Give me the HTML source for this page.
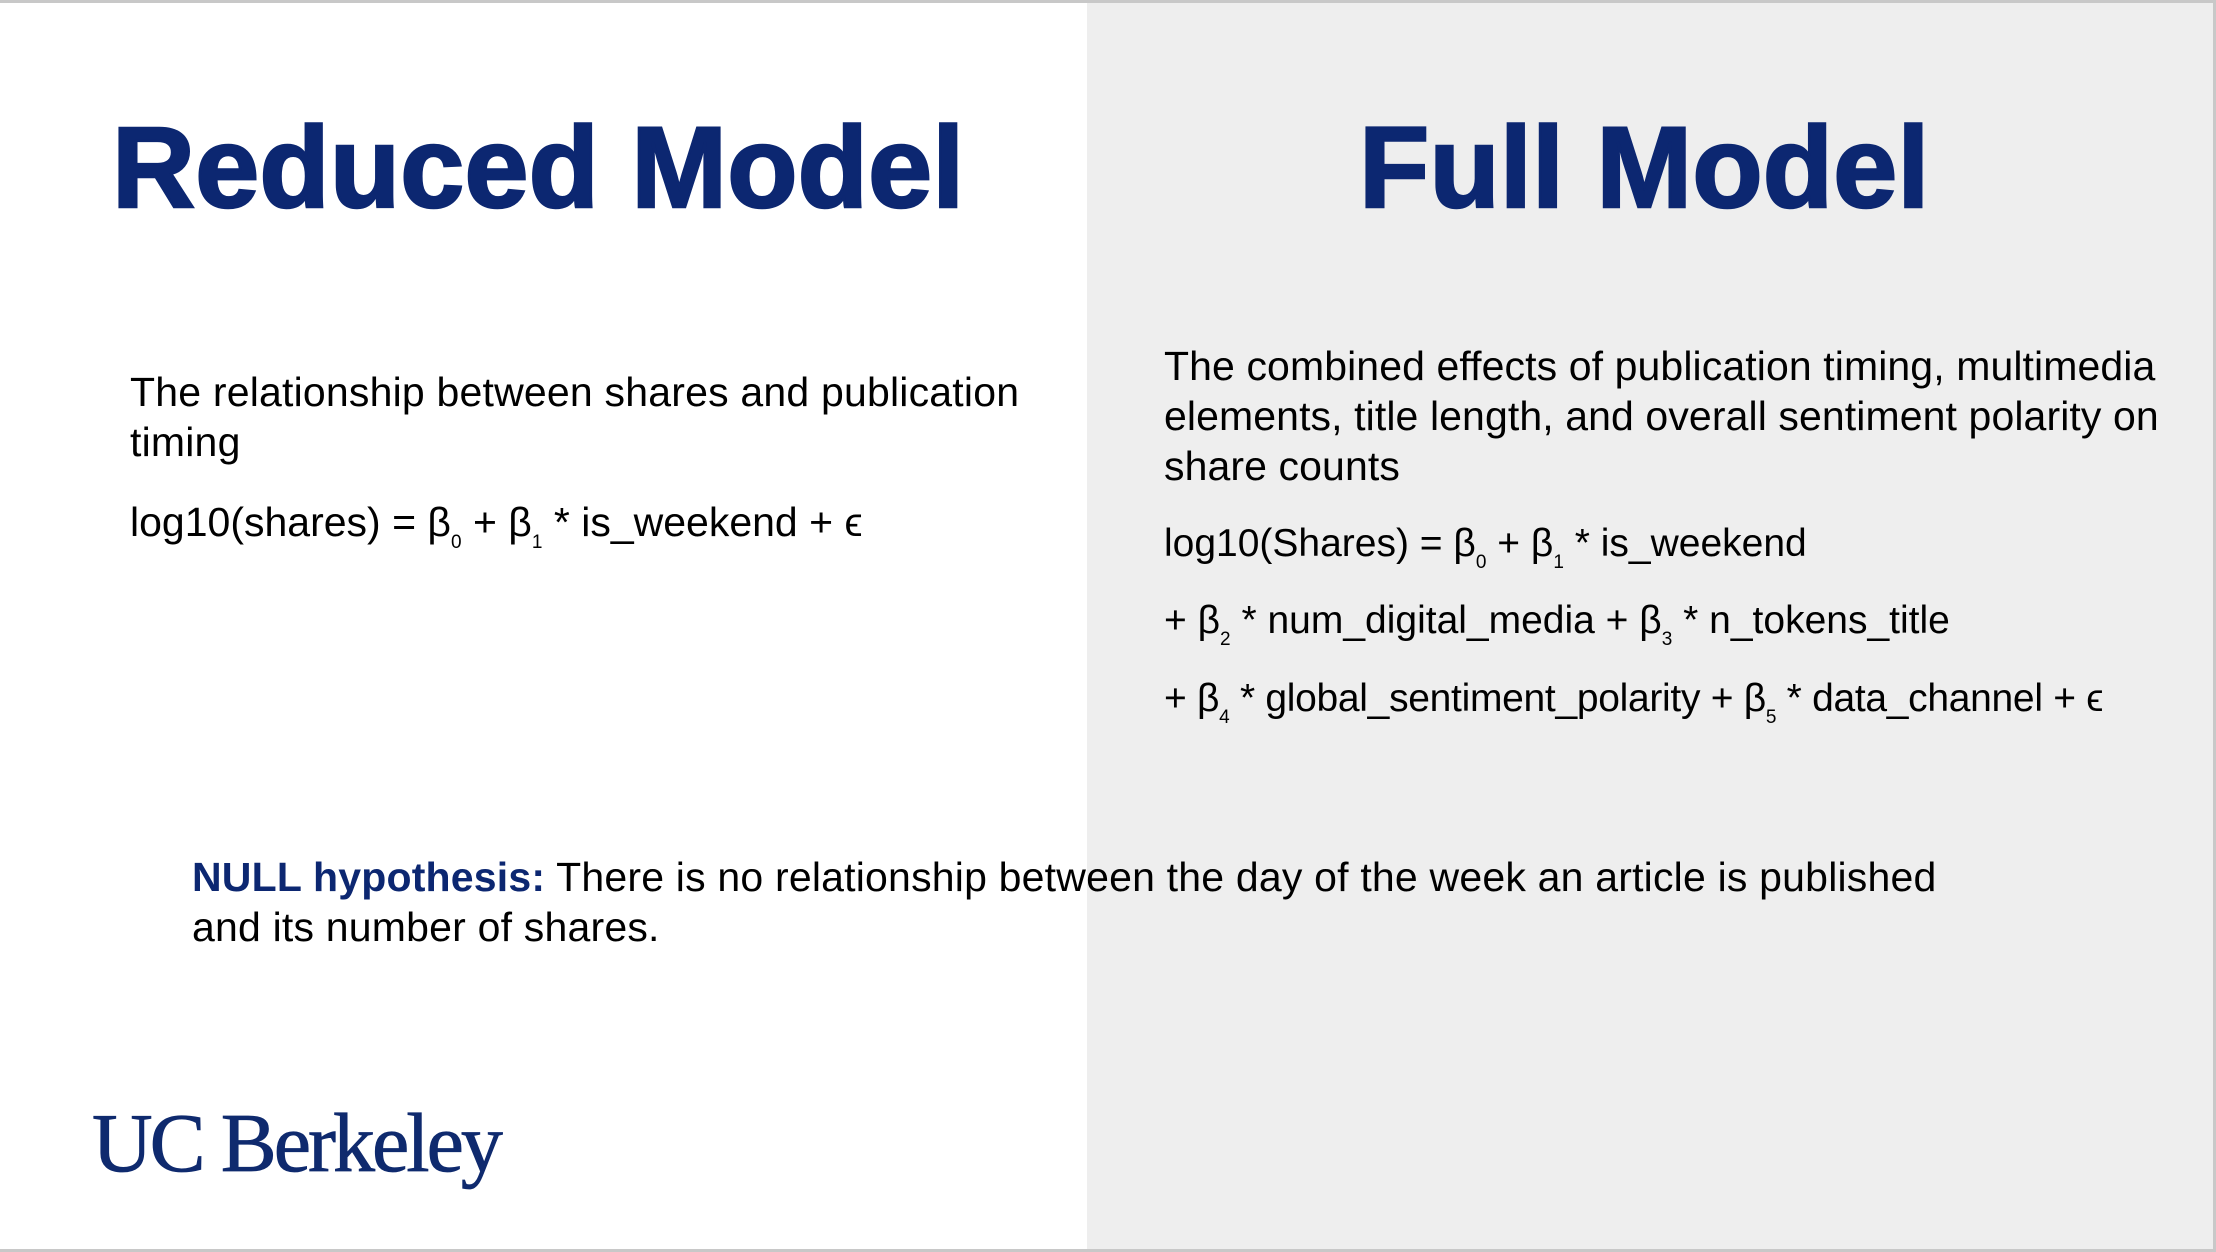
<!DOCTYPE html>
<html><head><meta charset="utf-8"><style>
html,body{margin:0;padding:0}
body{width:2216px;height:1252px;position:relative;overflow:hidden;background:#fff;font-family:"Liberation Sans",Arial,sans-serif;color:#000}
.gray{position:absolute;left:1087px;top:0;width:1129px;height:1252px;background:#eeeeee}
.bt{position:absolute;left:0;top:0;width:2216px;height:3px;background:#c8c8c8}
.bb{position:absolute;left:0;top:1249px;width:2216px;height:3px;background:#c8c8c8}
.br{position:absolute;left:2213px;top:0;width:3px;height:1252px;background:#c8c8c8}
.h{position:absolute;font-weight:bold;font-size:115px;color:#0c2771;line-height:114px;letter-spacing:0.2px;white-space:nowrap;-webkit-text-stroke:2.5px #0c2771}
.t{position:absolute;font-size:41px;line-height:50px;white-space:nowrap}
sub{font-size:19px;vertical-align:-12px;line-height:0}
.logo{position:absolute;left:92px;top:1094px;font-family:"Liberation Serif","Times New Roman",serif;font-size:84px;line-height:100px;color:#0f2a6e;letter-spacing:-3px;white-space:nowrap;-webkit-text-stroke:0.8px #0f2a6e}
</style></head><body>
<div class="gray"></div>
<div class="bt"></div><div class="bb"></div><div class="br"></div>
<div class="h" style="left:112px;top:111px">Reduced Model</div>
<div class="h" style="left:1359px;top:111px">Full Model</div>
<div class="t" style="left:130px;top:367px;letter-spacing:0.2px">The relationship between shares and publication<br>timing</div>
<div class="t" style="left:130px;top:497px">log10(shares) = β<sub>0</sub> + β<sub>1</sub> * is_weekend + ϵ</div>
<div class="t" style="left:1164px;top:341px;letter-spacing:0.1px">The combined effects of publication timing, multimedia<br>elements, title length, and overall sentiment polarity on<br>share counts</div>
<div class="t" style="left:1164px;top:519px;font-size:39px">log10(Shares) = β<sub>0</sub> + β<sub>1</sub> * is_weekend</div>
<div class="t" style="left:1164px;top:596px;font-size:39px">+ β<sub>2</sub> * num_digital_media + β<sub>3</sub> * n_tokens_title</div>
<div class="t" style="left:1164px;top:674px;font-size:39px;letter-spacing:-0.3px">+ β<sub>4</sub> * global_sentiment_polarity + β<sub>5</sub> * data_channel + ϵ</div>
<div class="t" style="left:192px;top:852px;letter-spacing:0.2px"><b style="color:#0c2771">NULL hypothesis:</b> There is no relationship between the day of the week an article is published<br>and its number of shares.</div>
<div class="logo">UC Berkeley</div>
</body></html>
